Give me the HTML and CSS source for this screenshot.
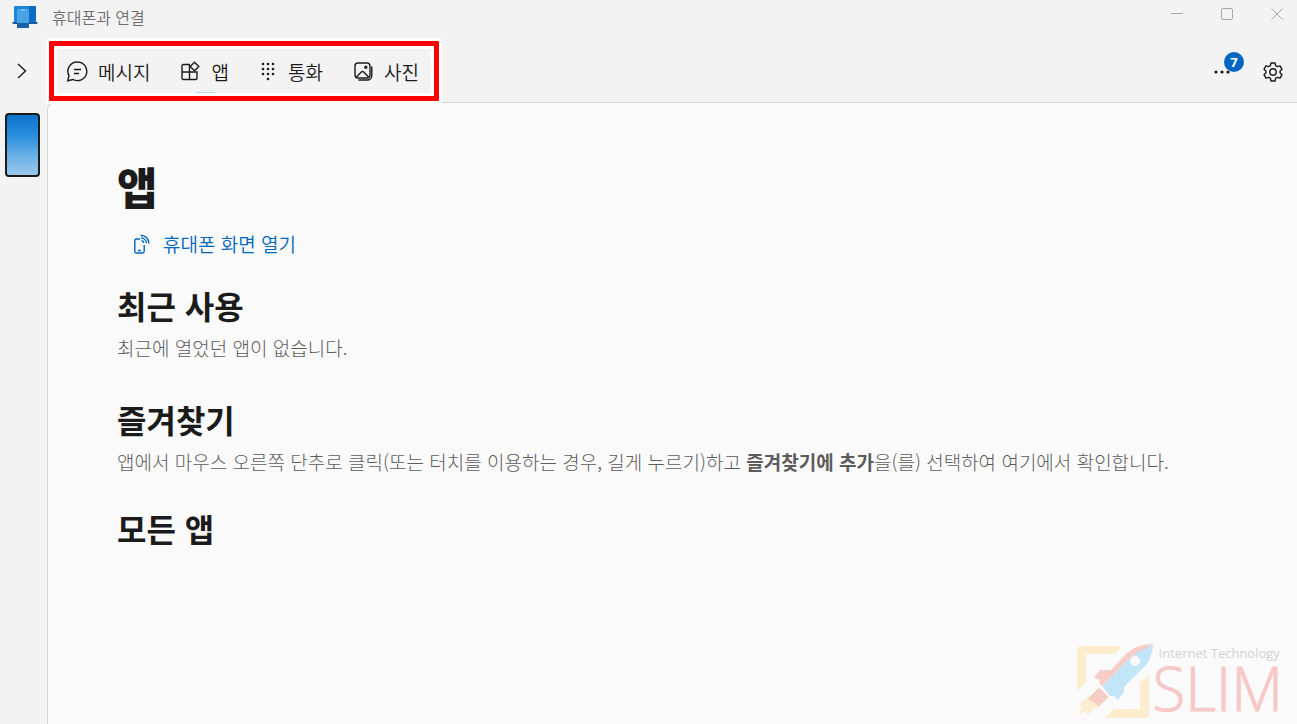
FILE: index.html
```html
<!DOCTYPE html>
<html lang="ko">
<head>
    <meta charset="UTF-8">
    <meta name="viewport" content="width=device-width, initial-scale=1.0">
    <title>휴대폰과 연결</title>
    <link rel="stylesheet" href="styles.css">
</head>
<body>

<header class="titlebar">
    <svg class="app-logo" width="26" height="24" viewBox="0 0 26 24">
        <rect x="2" y="1" width="22" height="17" rx="1" fill="#1c86d8"/>
        <path d="M17 1h6a1 1 0 0 1 1 1v16h-7z" fill="#0b6cc4"/>
        <path d="M0 17h26l-1 2H1z" fill="#1b5c9c"/>
        <rect x="5" y="4" width="12" height="19" rx="1" fill="#4aa3e4"/>
        <path d="M5 18h12v4a1 1 0 0 1-1 1H6a1 1 0 0 1-1-1z" fill="#1a5fa5"/>
        <path d="M9 5h4" stroke="#8cc8f2"/>
    </svg>
    <h1 class="titlebar-name">휴대폰과 연결</h1>
    <div class="window-buttons">
        <button type="button" aria-label="최소화">
            <svg width="12" height="12" viewBox="0 0 12 12"><path d="M0 5.500h12"/></svg>
        </button>
        <button type="button" aria-label="최대화">
            <svg width="12" height="12" viewBox="0 0 12 12"><rect x="0.500" y="0.500" width="11" height="11" rx="1.500"/></svg>
        </button>
        <button type="button" aria-label="닫기">
            <svg width="12" height="12" viewBox="0 0 12 12"><path d="M0.500 0.500l11 11M11.500 0.500l-11 11"/></svg>
        </button>
    </div>
</header>

<div class="toolbar">
    <button type="button" class="expand" aria-label="펼치기">
        <svg width="10" height="16" viewBox="0 0 10 16"><path d="M1 1l7.500 7-7.500 7"/></svg>
    </button>
    <nav class="tabs">
        <a href="#messages" class="tab">
            <svg width="22" height="22" viewBox="0 0 22 22">
                <path d="M11.500 2a9.300 9.300 0 1 1-4.400 17.500L1.700 20.700l1.300-5A9.300 9.300 0 0 1 11.500 2z"/>
                <path d="M8 9.500h7M8 13.500h5"/>
            </svg>
            메시지
        </a>
        <a href="#apps" class="tab active">
            <svg width="20" height="20" viewBox="0 0 20 20">
                <path d="M9 3.500H2.500A1.500 1.500 0 0 0 1 5v12A1.500 1.500 0 0 0 2.500 18.500h12A1.500 1.500 0 0 0 16 17v-6H1M8.500 3.500v15"/>
                <path d="M13.500 1.200l4.300 4.300-4.300 4.300L9.200 5.500z"/>
            </svg>
            앱
        </a>
        <a href="#calls" class="tab">
            <svg class="dots" width="18" height="20" viewBox="0 0 18 20">
                <circle cx="3" cy="3" r="1.300"/><circle cx="8" cy="3" r="1.300"/><circle cx="13" cy="3" r="1.300"/>
                <circle cx="3" cy="8" r="1.300"/><circle cx="8" cy="8" r="1.300"/><circle cx="13" cy="8" r="1.300"/>
                <circle cx="3" cy="13" r="1.300"/><circle cx="8" cy="13" r="1.300"/><circle cx="13" cy="13" r="1.300"/>
                <circle cx="8" cy="18" r="1.300"/>
            </svg>
            통화
        </a>
        <a href="#photos" class="tab">
            <svg width="20" height="20" viewBox="0 0 20 20">
                <rect x="1" y="2" width="15" height="15" rx="3"/>
                <path d="M2.500 16l4.800-5a1.700 1.700 0 0 1 2.400 0l4.800 5M17.800 5.500v9a4.500 4.500 0 0 1-4.500 4.500H4.500"/>
                <circle cx="11.800" cy="6.300" r="1"/>
            </svg>
            사진
        </a>
    </nav>
    <div class="tools">
        <button type="button" class="more" aria-label="자세히">
            <svg class="dots" width="18" height="4" viewBox="0 0 18 4">
                <circle cx="3" cy="2" r="1.600"/><circle cx="9" cy="2" r="1.600"/><circle cx="15" cy="2" r="1.600"/>
            </svg>
            <span class="badge">7</span>
        </button>
        <button type="button" class="settings" aria-label="설정">
            <svg width="20" height="20" viewBox="0 0 20 20">
                <path d="M8 1h4l.6 2.600 1.800 1 2.600-.8 2 3.500L17 9.200v1.600l2 1.900-2 3.500-2.600-.8-1.800 1L12 19H8l-.6-2.600-1.800-1-2.600.8-2-3.500 2-1.900V9.200L1 7.300l2-3.500 2.600.8 1.800-1z" stroke-linejoin="round"/>
                <circle cx="10" cy="10" r="3.200"/>
            </svg>
        </button>
    </div>
</div>

<div class="layout">
    <aside class="rail">
        <button type="button" class="phone" aria-label="휴대폰"></button>
    </aside>

    <main class="panel">
        <h2 class="page-title">앱</h2>
        <a href="#screen" class="open-screen">
            <svg width="18" height="20" viewBox="0 0 18 20">
                <path d="M7 5H3.500A1.700 1.700 0 0 0 1.800 6.700v10.600A1.700 1.700 0 0 0 3.500 19h6a1.700 1.700 0 0 0 1.700-1.700V11M5 16.500h3"/>
                <path d="M7.500 1.200A8.500 8.500 0 0 1 16 9.500M8 4a5.500 5.500 0 0 1 5.500 5M8.500 6.800A2.500 2.500 0 0 1 10.800 9"/>
            </svg>
            휴대폰 화면 열기
        </a>

        <section class="group recent">
            <h3>최근 사용</h3>
            <p>최근에 열었던 앱이 없습니다.</p>
        </section>

        <section class="group">
            <h3>즐겨찾기</h3>
            <p>앱에서 마우스 오른쪽 단추로 클릭(또는 터치를 이용하는 경우, 길게 누르기)하고 <strong>즐겨찾기에 추가</strong>을(를) 선택하여 여기에서 확인합니다.</p>
        </section>

        <section class="group">
            <h3>모든 앱</h3>
        </section>
    </main>
</div>

<div class="watermark">
    <svg width="78" height="78" viewBox="0 0 78 78">
        <defs>
            <pattern id="specks" width="4" height="4" patternUnits="userSpaceOnUse">
                <rect width="4" height="4" fill="#f6c8c6"/>
                <rect x="0" y="0" width="1" height="1" fill="#fceccf"/>
                <rect x="2" y="2" width="1" height="1" fill="#fceccf"/>
            </pattern>
        </defs>
        <path d="M2 48V7q0-4 4-4h41l-7 8H11v28z" fill="#fcedcf"/>
        <path d="M74 32v39q0 4-4 4H30l9-9h26V40z" fill="#fcedcf"/>
        <path d="M24 44l10 10-12 12-2-2-8 9v-6l-9 6 5-10H3l9-8z" fill="#fcedcf"/>
        <path d="M24 45l9 9-9 9-11-7z" fill="url(#specks)"/>
        <path d="M78 0q0 8-3 15-2 6-7 10L49 44v5l-6 8-4-4h-4l-8-10 24-25q12-12 27-18z" fill="#c3e5f8"/>
        <path d="M27 43l-3-3 1-3-6-2 6-8h11l16-17q9-8 23-9l1 2q-12 4-21 12z" fill="url(#specks)"/>
        <circle cx="60" cy="18" r="5" fill="#fafafa"/>
    </svg>
    <div class="watermark-text">
        <span class="watermark-top">Internet Technology</span>
        <span class="watermark-name">SLIM</span>
    </div>
</div>

</body>
</html>
```
FILE: styles.css
```css
* {
    box-sizing: border-box;
}

body {
    font-family: "Noto Sans CJK KR", sans-serif;
    font-size: 19px;
    margin: 0;
    min-height: 100vh;
    display: flex;
    flex-direction: column;
    background-color: #f3f3f3;
    color: #1b1b1b;
}

svg {
    fill: none;
    stroke: #1b1b1b;
    stroke-width: 1.4;
    flex: none;
}

button {
    font-family: inherit;
    border: none;
    padding: 0;
    background: none;
    cursor: pointer;
}

a {
    text-decoration: none;
    color: inherit;
}

.titlebar {
    display: flex;
    align-items: center;
    height: 34px;
    padding-left: 12px;
}

.app-logo {
    stroke: none;
}

.titlebar-name {
    margin: 0 0 0 14px;
    font-size: 16px;
    line-height: 22px;
    font-weight: 350;
    color: #6e6e6e;
}

.window-buttons {
    display: flex;
    gap: 10px;
    align-self: flex-start;
    margin-left: auto;
}

.window-buttons button {
    display: flex;
    justify-content: center;
    align-items: center;
    width: 40px;
    height: 28px;
}

.window-buttons svg {
    stroke: #a8a8a8;
    stroke-width: 1;
}

.toolbar {
    display: flex;
    align-items: center;
    height: 68px;
    padding: 6px 14px 0 0;
}

.expand {
    display: flex;
    justify-content: center;
    width: 44px;
}

/* red frame around the tabs, with a white edge on both sides */
.tabs {
    position: relative;
    display: flex;
    gap: 31px;
    height: 60px;
    margin-left: 5px;
    padding: 0 15px 0 12px;
    border: 5px solid #ff0000;
    box-shadow: 0 0 0 3px #fff, inset 0 0 0 3px #fff;
    border-radius: 1px;
}

.tab {
    position: relative;
    display: flex;
    align-items: center;
    gap: 10px;
    font-weight: 350;
}

.tab.active::after {
    content: '';
    position: absolute;
    left: 15px;
    bottom: 3px;
    width: 18px;
    height: 1px;
    background-color: #b5dcf5;
}

.dots {
    fill: #1b1b1b;
    stroke: none;
}

.tools {
    display: flex;
    align-items: center;
    gap: 32px;
    margin-left: auto;
    padding-top: 2px;
}

.more {
    position: relative;
    display: flex;
}

.badge {
    position: absolute;
    left: 11px;
    bottom: 2px;
    width: 20px;
    height: 20px;
    border-radius: 50%;
    background-color: #0067c0;
    color: #fff;
    font: bold 13px/20px "Open Sans", sans-serif;
    text-align: center;
}

.settings {
    display: flex;
}

.layout {
    display: flex;
    flex: 1;
}

.rail {
    width: 47px;
    padding: 11px 0 0 5px;
}

.phone {
    display: block;
    width: 35px;
    height: 64px;
    border: 2px solid #1b1b1b;
    border-radius: 4px;
    background: linear-gradient(#0c74cc, #2b8fdc 35%, #6db2e6 70%, #9cc8ec);
}

.panel {
    flex: 1;
    padding: 51px 69px 40px;
    border: 1px solid #d6d6d6;
    border-width: 1px 0 0 1px;
    border-top-left-radius: 8px;
    background-color: #fafafa;
}

.page-title {
    margin: 0;
    font-size: 44px;
    line-height: 64px;
    font-weight: 900;
}

.open-screen {
    display: flex;
    align-items: center;
    gap: 12px;
    width: max-content;
    margin: 2px 0 12px 16px;
    padding: 8px 0;
    line-height: 32px;
    font-weight: 350;
    color: #0067c0;
}

.open-screen svg {
    stroke: #0067c0;
}

.group {
    margin-bottom: 26px;
}

.recent {
    margin-bottom: 31px;
}

.group h3 {
    margin: 0;
    font-size: 32px;
    line-height: 50px;
    font-weight: 700;
}

.group p {
    margin: 3px 0 0;
    line-height: 30px;
    font-weight: 300;
    color: #5c5c5c;
}

.group strong {
    font-weight: 700;
}

.watermark {
    position: absolute;
    right: 14px;
    bottom: 3px;
    display: flex;
}

.watermark svg {
    stroke: none;
    overflow: visible;
}

.watermark-text {
    display: flex;
    flex-direction: column;
    font-family: "Open Sans", sans-serif;
}

.watermark-top {
    padding-left: 6px;
    font-size: 13px;
    line-height: 20px;
    font-weight: 500;
    color: #d2d2d2;
}

.watermark-name {
    font-size: 60px;
    line-height: 50px;
    font-weight: 300;
    color: #f6c8c6;
    -webkit-text-stroke: 1px #f6c8c6;
}
```
